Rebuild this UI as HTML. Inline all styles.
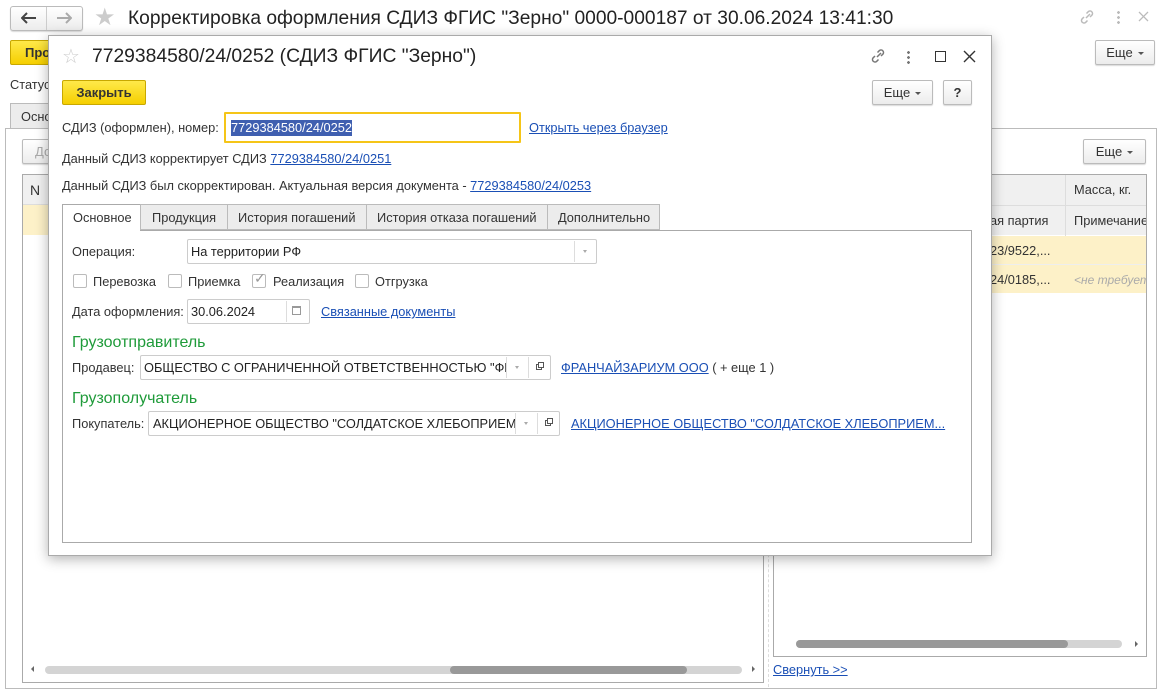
<!DOCTYPE html>
<html><head><meta charset="utf-8"><style>
*{box-sizing:border-box;margin:0;padding:0}
body{width:1173px;height:697px;overflow:hidden;background:#fff;font-family:"Liberation Sans",Arial,sans-serif;font-size:12.8px;color:#333;position:relative}
.a{position:absolute;white-space:nowrap}
.t{line-height:16px}
.btn{position:absolute;border:1px solid #bbb;border-radius:2px;background:linear-gradient(#fff,#ececec);box-shadow:0 1px 1px rgba(0,0,0,.15);font-size:13px;text-align:center}
.yb{position:absolute;border:1px solid #c8a800;border-radius:2px;background:linear-gradient(#ffe94a,#f5cf00);font-weight:bold;font-size:13px;text-align:center;color:#333}
.lnk{color:#1a4fb5;text-decoration:underline}
.inp{position:absolute;border:1px solid #ccc;border-radius:2px;background:#fff}
.cb{position:absolute;width:14px;height:14px;border:1px solid #bbb;border-radius:2px;background:#fff}
.g{color:#1f9b3a;font-size:16px}
.arr{display:inline-block;width:0;height:0;border-left:3px solid transparent;border-right:3px solid transparent;border-top:3px solid #555;vertical-align:middle;margin-left:5px}
</style></head><body>

<!-- main window header -->
<div class="btn" style="left:10px;top:6px;width:73px;height:25px;border-radius:3px"></div>
<div class="a" style="left:46px;top:7px;width:1px;height:23px;background:#ccc"></div>
<svg class="a" style="left:21px;top:12px" width="16" height="12" viewBox="0 0 16 12"><path d="M1 6h14M6 1L1 6l5 5" stroke="#444" stroke-width="2" fill="none"/></svg>
<svg class="a" style="left:56px;top:12px" width="16" height="12" viewBox="0 0 16 12"><path d="M1 6h14M10 1l5 5-5 5" stroke="#aaa" stroke-width="2" fill="none"/></svg>
<div class="a" style="left:94px;top:3px;font-size:24px;color:#ccc">&#9733;</div>
<div class="a" style="left:128px;top:7px;font-size:19.2px;color:#222;line-height:24px">Корректировка оформления СДИЗ ФГИС "Зерно" 0000-000187 от 30.06.2024 13:41:30</div>
<svg class="a" style="left:1078px;top:8px" width="18" height="18" viewBox="0 0 18 18" fill="none" stroke="#bbb" stroke-width="1.5"><path d="M8 10l4-4M6 9l-2 2a2.5 2.5 0 0 0 3.5 3.5l2-2M12 9l2-2a2.5 2.5 0 0 0-3.5-3.5l-2 2"/></svg>
<div class="a" style="left:1117px;top:10px;width:3px;height:14px;background:radial-gradient(circle,#bbb 1.3px,transparent 1.5px) 0 0/3px 5px"></div>
<svg class="a" style="left:1138px;top:11px" width="11" height="11" viewBox="0 0 11 11" stroke="#bbb" stroke-width="1.3"><path d="M1 1l9 9M10 1L1 10"/></svg>

<div class="yb" style="left:10px;top:40px;width:60px;height:25px;line-height:23px;text-align:left;padding-left:14px">Про</div>
<div class="btn" style="left:1095px;top:40px;width:60px;height:25px;line-height:23px">Еще<span class="arr"></span></div>
<div class="a t" style="left:10px;top:77px">Статус</div>
<div class="a" style="left:10px;top:103px;width:60px;height:26px;border:1px solid #bbb;border-bottom:none;background:#ececec;padding:5px 0 0 10px">Осно</div>
<div class="a" style="left:5px;top:128px;width:1152px;height:561px;border:1px solid #bbb"></div>

<!-- left panel -->
<div class="btn" style="left:22px;top:139px;width:40px;height:25px;line-height:23px;color:#aaa;text-align:left;padding-left:12px">До</div>
<div class="a" style="left:22px;top:174px;width:742px;height:509px;border:1px solid #aaa"></div>
<div class="a" style="left:23px;top:175px;width:740px;height:30px;background:#f0f0f0;border-bottom:1px solid #ddd"></div>
<div class="a t" style="left:30px;top:182px;font-size:14px">N</div>
<div class="a" style="left:23px;top:205px;width:740px;height:30px;background:#fdf1c8"></div>
<div class="a" style="left:45px;top:666px;width:697px;height:8px;border-radius:4px;background:#d4d4d4"></div>
<div class="a" style="left:450px;top:666px;width:237px;height:8px;border-radius:4px;background:#999"></div>
<div class="a" style="left:31px;top:666px;border-top:3px solid transparent;border-bottom:3px solid transparent;border-right:3px solid #666"></div>
<div class="a" style="left:752px;top:666px;border-top:3px solid transparent;border-bottom:3px solid transparent;border-left:3px solid #666"></div>
<div class="a" style="left:768px;top:240px;width:0;height:447px;border-left:1px dashed #ddd"></div>

<!-- right panel -->
<div class="btn" style="left:1083px;top:139px;width:63px;height:25px;line-height:23px">Еще<span class="arr"></span></div>
<div class="a" style="left:773px;top:174px;width:374px;height:483px;border:1px solid #aaa"></div>
<div class="a" style="left:774px;top:175px;width:372px;height:60px;background:#f0f0f0"></div>
<div class="a" style="left:774px;top:205px;width:372px;height:1px;background:#ddd"></div>
<div class="a" style="left:1065px;top:175px;width:1px;height:118px;background:#ddd"></div>
<div class="a t" style="left:1074px;top:182px">Масса, кг.</div>
<div class="a t" style="left:990px;top:213px">ая партия</div>
<div class="a t" style="left:1074px;top:213px;width:72px;overflow:hidden">Примечание</div>
<div class="a" style="left:774px;top:236px;width:372px;height:57px;background:#fdf1c8"></div>
<div class="a" style="left:774px;top:264px;width:372px;height:1px;background:#eee"></div>
<div class="a t" style="left:990px;top:243px">23/9522,...</div>
<div class="a t" style="left:990px;top:272px">24/0185,...</div>
<div class="a t" style="left:1074px;top:272px;color:#aaa;font-style:italic;font-size:12px;width:72px;overflow:hidden">&lt;не требуется</div>
<div class="a" style="left:796px;top:640px;width:326px;height:8px;border-radius:4px;background:#d4d4d4"></div>
<div class="a" style="left:796px;top:640px;width:272px;height:8px;border-radius:4px;background:#999"></div>
<div class="a" style="left:1135px;top:641px;border-top:3px solid transparent;border-bottom:3px solid transparent;border-left:3px solid #666"></div>
<div class="a t lnk" style="left:773px;top:662px">Свернуть &gt;&gt;</div>

<!-- dialog -->
<div class="a" style="left:48px;top:35px;width:944px;height:521px;background:#fff;border:1px solid #aaa;box-shadow:0 3px 12px rgba(0,0,0,.3)"></div>
<div class="a" style="left:62px;top:44px;font-size:20px;color:#ccc">&#9734;</div>
<div class="a" style="left:92px;top:45px;font-size:19.3px;color:#222;line-height:24px">7729384580/24/0252 (СДИЗ ФГИС "Зерно")</div>
<svg class="a" style="left:869px;top:47px" width="18" height="18" viewBox="0 0 18 18" fill="none" stroke="#777" stroke-width="1.5"><path d="M8 10l4-4M6 9l-2 2a2.5 2.5 0 0 0 3.5 3.5l2-2M12 9l2-2a2.5 2.5 0 0 0-3.5-3.5l-2 2"/></svg>
<div class="a" style="left:907px;top:50px;width:3px;height:14px;background:radial-gradient(circle,#777 1.3px,transparent 1.5px) 0 0/3px 5px"></div>
<div class="a" style="left:935px;top:51px;width:11px;height:11px;border:1.5px solid #333"></div>
<svg class="a" style="left:963px;top:50px" width="13" height="13" viewBox="0 0 13 13" stroke="#333" stroke-width="1.4"><path d="M1 1l11 11M12 1L1 12"/></svg>

<div class="yb" style="left:62px;top:80px;width:84px;height:25px;line-height:23px">Закрыть</div>
<div class="btn" style="left:872px;top:80px;width:61px;height:25px;line-height:23px">Еще<span class="arr"></span></div>
<div class="btn" style="left:943px;top:80px;width:29px;height:25px;line-height:23px;font-weight:bold">?</div>

<div class="a t" style="left:62px;top:120px">СДИЗ (оформлен), номер:</div>
<div class="a" style="left:224px;top:112px;width:297px;height:31px;border:2px solid #f5c518;border-radius:1px"></div>
<div class="a t" style="left:231px;top:120px;background:#3f5fb0;color:#fff">7729384580/24/0252</div>
<div class="a t lnk" style="left:529px;top:120px">Открыть через браузер</div>
<div class="a t" style="left:62px;top:151px">Данный СДИЗ корректирует СДИЗ <span class="lnk">7729384580/24/0251</span></div>
<div class="a t" style="left:62px;top:178px">Данный СДИЗ был скорректирован. Актуальная версия документа - <span class="lnk">7729384580/24/0253</span></div>

<!-- tabs -->
<div class="a" style="left:62px;top:230px;width:910px;height:313px;border:1px solid #aaa"></div>
<div class="a" style="left:62px;top:204px;width:79px;height:27px;border:1px solid #aaa;border-bottom:none;background:#fff;padding:5px 0 0 10px">Основное</div>
<div class="a" style="left:140px;top:204px;width:88px;height:26px;border:1px solid #bbb;background:#ececec;padding:5px 0 0 11px">Продукция</div>
<div class="a" style="left:227px;top:204px;width:140px;height:26px;border:1px solid #bbb;background:#ececec;padding:5px 0 0 10px">История погашений</div>
<div class="a" style="left:366px;top:204px;width:182px;height:26px;border:1px solid #bbb;background:#ececec;padding:5px 0 0 10px">История отказа погашений</div>
<div class="a" style="left:547px;top:204px;width:113px;height:26px;border:1px solid #bbb;background:#ececec;padding:5px 0 0 10px">Дополнительно</div>

<div class="a t" style="left:72px;top:244px">Операция:</div>
<div class="inp" style="left:187px;top:239px;width:410px;height:25px"></div>
<div class="a t" style="left:191px;top:244px;color:#222">На территории РФ</div>
<div class="a" style="left:574px;top:241px;width:1px;height:21px;background:#ddd"></div>
<div class="a" style="left:583px;top:250px;border-left:2.5px solid transparent;border-right:2.5px solid transparent;border-top:3px solid #aaa"></div>

<div class="cb" style="left:73px;top:274px"></div><div class="a t" style="left:93px;top:274px">Перевозка</div>
<div class="cb" style="left:168px;top:274px"></div><div class="a t" style="left:188px;top:274px">Приемка</div>
<div class="cb" style="left:252px;top:274px"></div><div class="a" style="left:254px;top:270px;color:#999;font-size:14px">✓</div><div class="a t" style="left:273px;top:274px">Реализация</div>
<div class="cb" style="left:355px;top:274px"></div><div class="a t" style="left:375px;top:274px">Отгрузка</div>

<div class="a t" style="left:72px;top:304px">Дата оформления:</div>
<div class="inp" style="left:187px;top:299px;width:123px;height:25px"></div>
<div class="a t" style="left:191px;top:304px;color:#222">30.06.2024</div>
<div class="a" style="left:286px;top:301px;width:1px;height:21px;background:#ddd"></div>
<div class="a" style="left:292px;top:306px;width:9px;height:9px;border:1px solid #999;border-top-width:2px"></div>
<div class="a t lnk" style="left:321px;top:304px">Связанные документы</div>

<div class="a g" style="left:72px;top:334px">Грузоотправитель</div>
<div class="a t" style="left:72px;top:360px">Продавец:</div>
<div class="inp" style="left:140px;top:355px;width:411px;height:25px"></div>
<div class="a t" style="left:144px;top:360px;color:#222;width:362px;overflow:hidden">ОБЩЕСТВО С ОГРАНИЧЕННОЙ ОТВЕТСТВЕННОСТЬЮ "ФРАНЧАЙЗАРИУМ"</div>
<div class="a" style="left:506px;top:357px;width:1px;height:21px;background:#ddd"></div>
<div class="a" style="left:515px;top:366px;border-left:2.5px solid transparent;border-right:2.5px solid transparent;border-top:3px solid #aaa"></div>
<div class="a" style="left:528px;top:357px;width:1px;height:21px;background:#ddd"></div>
<div class="a" style="left:536px;top:364px;width:6px;height:6px;border:1px solid #555"></div><div class="a" style="left:538px;top:362px;width:6px;height:6px;border:1px solid #555;background:#fff"></div>
<div class="a t" style="left:561px;top:360px"><span class="lnk">ФРАНЧАЙЗАРИУМ ООО</span> ( + еще 1 )</div>

<div class="a g" style="left:72px;top:390px">Грузополучатель</div>
<div class="a t" style="left:72px;top:416px">Покупатель:</div>
<div class="inp" style="left:148px;top:411px;width:412px;height:25px"></div>
<div class="a t" style="left:153px;top:416px;color:#222;width:362px;overflow:hidden">АКЦИОНЕРНОЕ ОБЩЕСТВО "СОЛДАТСКОЕ ХЛЕБОПРИЕМНОЕ"</div>
<div class="a" style="left:515px;top:413px;width:1px;height:21px;background:#ddd"></div>
<div class="a" style="left:524px;top:422px;border-left:2.5px solid transparent;border-right:2.5px solid transparent;border-top:3px solid #aaa"></div>
<div class="a" style="left:537px;top:413px;width:1px;height:21px;background:#ddd"></div>
<div class="a" style="left:545px;top:420px;width:6px;height:6px;border:1px solid #555"></div><div class="a" style="left:547px;top:418px;width:6px;height:6px;border:1px solid #555;background:#fff"></div>
<div class="a t lnk" style="left:571px;top:416px">АКЦИОНЕРНОЕ ОБЩЕСТВО "СОЛДАТСКОЕ ХЛЕБОПРИЕМ...</div>

</body></html>
